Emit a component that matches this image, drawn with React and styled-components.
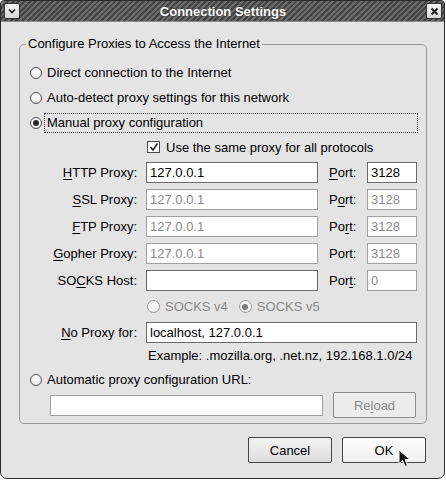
import React from 'react';
import styled, { createGlobalStyle } from 'styled-components';

const GlobalStyle = createGlobalStyle`
  html, body {
    margin: 0;
    padding: 0;
    background: #ffffff;
  }
  body {
    font-family: "Liberation Sans", Arial, sans-serif;
    font-size: 13px;
    color: #000;
  }
`;

const Window = styled.div`
  box-sizing: border-box;
  width: 445px;
  height: 479px;
  border: 1px solid #2b2b2b;
  border-radius: 4px 4px 7px 7px;
  background: #e4e4e4;
  overflow: hidden;
  display: flex;
  flex-direction: column;
`;

const TitleBar = styled.div`
  height: 20px;
  display: flex;
  align-items: center;
  justify-content: space-between;
  padding: 0 2px 0 3px;
  background: repeating-linear-gradient(135deg, #444 0px, #444 2px, #6c6c6c 2px, #6c6c6c 4px);
  border-bottom: 1px solid #8a8a8a;
`;

const Title = styled.div`
  flex: 1;
  text-align: center;
  color: #fff;
  font-weight: bold;
  font-size: 13px;
  text-shadow: 0 0 2px #333;
`;

const TitleButton = styled.div`
  box-sizing: border-box;
  width: 16px;
  height: 16px;
  border: 1px solid #333;
  border-radius: 2px;
  background: linear-gradient(#f4f4f4, #d8d8d8);
  display: flex;
  align-items: center;
  justify-content: center;
`;

const Body = styled.div`
  flex: 1;
  display: flex;
  flex-direction: column;
  padding: 15px 17px 0 18px;
`;

const Group = styled.fieldset`
  margin: 0;
  padding: 9px 8px 5px 10px;
  border: 1px solid #9a9a9a;
  border-radius: 5px;
  min-width: 0;
  display: flex;
  flex-direction: column;
`;

const Legend = styled.legend`
  padding: 0 2px;
  margin-left: -4px;
  line-height: 14px;
`;

const RadioRow = styled.div`
  display: flex;
  align-items: center;
  height: ${p => p.h || 25}px;
  margin-left: ${p => p.indent || 0}px;
`;

const RadioDot = styled.span`
  box-sizing: border-box;
  flex: none;
  width: ${p => p.size || 12}px;
  height: ${p => p.size || 12}px;
  border-radius: 50%;
  border: 1px solid ${p => (p.disabled ? '#9a9a9a' : '#4a4a4a')};
  background: linear-gradient(#ffffff, #ececec);
  display: flex;
  align-items: center;
  justify-content: center;
  margin-right: 3px;

  &::after {
    content: '';
    display: ${p => (p.checked ? 'block' : 'none')};
    width: 6px;
    height: 6px;
    border-radius: 50%;
    background: ${p => (p.disabled ? '#7a7a7a' : '#2a2a2a')};
  }
`;

const RadioLabel = styled.span`
  box-sizing: border-box;
  height: 20px;
  line-height: 18px;
  padding: 0 2px;
  color: ${p => (p.disabled ? '#8a8a8a' : '#000')};
  border: 1px ${p => (p.focused ? 'dotted #4a4a4a' : 'solid transparent')};
  margin-left: -1px;
  flex: ${p => (p.focused ? 1 : 'none')};
  margin-right: ${p => p.gap || 0}px;
`;

const CheckRow = styled.div`
  display: flex;
  align-items: center;
  height: 24px;
  margin-left: 117px;
  gap: 6px;
`;

const CheckBox = styled.span`
  box-sizing: border-box;
  width: 13px;
  height: 12px;
  border: 1px solid #4a4a4a;
  background: #fff;
  display: flex;
  align-items: center;
  justify-content: center;
`;

const ProxyGrid = styled.div`
  display: grid;
  grid-template-columns: 116px 172px 49px 50px;
  grid-auto-rows: 21px;
  row-gap: 6px;
  margin-top: ${p => p.top || 0}px;
`;

const FieldLabel = styled.label`
  display: flex;
  align-items: center;
  justify-content: flex-end;
  padding-right: 9px;
  white-space: nowrap;
`;

const PortLabel = styled.label`
  display: flex;
  align-items: center;
  padding-left: 11px;
`;

const TextField = styled.input`
  box-sizing: border-box;
  width: 100%;
  height: ${p => p.h || 21}px;
  margin: 0;
  padding: 0 3px;
  font: inherit;
  font-size: 13px;
  background: #fff;
  color: ${p => (p.disabled ? '#8a8a8a' : '#000')};
  border: 1px solid ${p => (p.disabled ? '#a0a0a0' : '#6a6a6a')};
  border-radius: 0;
  outline: none;
  grid-column: ${p => p.span || 'auto'};

  &:disabled {
    -webkit-text-fill-color: #8a8a8a;
    opacity: 1;
  }
`;

const Hint = styled.div`
  height: 26px;
  line-height: 26px;
  margin-left: 118px;
  white-space: nowrap;
`;

const UrlRow = styled.div`
  display: flex;
  align-items: center;
  height: 26px;
  margin-top: 1px;
  padding-left: 20px;
  gap: 10px;
`;

const Button = styled.button`
  position: relative;
  box-sizing: border-box;
  width: ${p => p.w || 84}px;
  height: 26px;
  margin: 0;
  padding: 0;
  font: inherit;
  font-size: 13px;
  color: ${p => (p.disabled ? '#8a8a8a' : '#000')};
  border: 1px solid ${p => (p.disabled ? '#8c8c8c' : '#444')};
  border-radius: 2px;
  background: ${p =>
    p.hot
      ? 'linear-gradient(#fcfcfc, #f0f0f0)'
      : p.disabled
      ? '#ececec'
      : 'linear-gradient(#f2f2f2, #dedede)'};
`;

const ButtonRow = styled.div`
  display: flex;
  justify-content: flex-end;
  gap: 10px;
  margin-top: 13px;
  padding-right: 1px;
`;

const U = styled.span`
  text-decoration: underline;
  text-underline-offset: 2px;
`;

const Pointer = styled.svg`
  position: absolute;
  left: 55px;
  top: 11px;
`;

const proxies = [
  { label: <><U>H</U>TTP Proxy:</>, port: <><U>P</U>ort:</>, host: '127.0.0.1', num: '3128', on: true },
  { label: <><U>S</U>SL Proxy:</>, port: <>P<U>o</U>rt:</>, host: '127.0.0.1', num: '3128' },
  { label: <><U>F</U>TP Proxy:</>, port: <>Po<U>r</U>t:</>, host: '127.0.0.1', num: '3128' },
  { label: <><U>G</U>opher Proxy:</>, port: <>Port:</>, host: '127.0.0.1', num: '3128' },
  { label: <>SO<U>C</U>KS Host:</>, port: <>Por<U>t</U>:</>, host: '', num: '0', on: true },
];

function Radio({ checked, disabled, size, children, focused, gap }) {
  return (
    <>
      <RadioDot checked={checked} disabled={disabled} size={size} />
      <RadioLabel focused={focused} disabled={disabled} gap={gap}>{children}</RadioLabel>
    </>
  );
}

export default function App() {
  return (
    <>
      <GlobalStyle />
      <Window>
        <TitleBar>
          <TitleButton>
            <svg width="10" height="8" viewBox="0 0 10 8">
              <path d="M2 2.5 L5 5.5 L8 2.5" fill="none" stroke="#222" strokeWidth="1.6" />
            </svg>
          </TitleButton>
          <Title>Connection Settings</Title>
          <TitleButton>
            <svg width="9" height="9" viewBox="0 0 9 9">
              <path d="M1.5 1.5 L7.5 7.5 M7.5 1.5 L1.5 7.5" fill="none" stroke="#222" strokeWidth="2" />
            </svg>
          </TitleButton>
        </TitleBar>

        <Body>
          <Group>
            <Legend>Configure Proxies to Access the Internet</Legend>
            <RadioRow>
              <Radio>Direct connection to the Internet</Radio>
            </RadioRow>
            <RadioRow>
              <Radio>Auto-detect proxy settings for this network</Radio>
            </RadioRow>
            <RadioRow>
              <Radio checked focused>Manual proxy configuration</Radio>
            </RadioRow>
            <CheckRow>
              <CheckBox>
                <svg width="10" height="10" viewBox="0 0 10 10">
                  <path d="M1.5 5 L4 8 L8.5 1.5" fill="none" stroke="#222" strokeWidth="1.6" />
                </svg>
              </CheckBox>
              <span>Use the same proxy for all protocols</span>
            </CheckRow>

            <ProxyGrid top={3}>
              {proxies.map((p, i) => (
                <React.Fragment key={i}>
                  <FieldLabel>{p.label}</FieldLabel>
                  <TextField defaultValue={p.host} disabled={!p.on} readOnly />
                  <PortLabel>{p.port}</PortLabel>
                  <TextField defaultValue={p.num} disabled={!p.on || p.num === '0'} readOnly />
                </React.Fragment>
              ))}
            </ProxyGrid>

            <RadioRow h={31} indent={117}>
              <Radio disabled size={13} gap={8}>SOCKS v4</Radio>
              <Radio disabled checked size={13}>SOCKS v5</Radio>
            </RadioRow>

            <ProxyGrid>
              <FieldLabel><U>N</U>o Proxy for:</FieldLabel>
              <TextField span="2 / 5" defaultValue="localhost, 127.0.0.1" readOnly />
            </ProxyGrid>
            <Hint>Example: .mozilla.org, .net.nz, 192.168.1.0/24</Hint>

            <RadioRow h={22}>
              <Radio>Automatic proxy configuration URL:</Radio>
            </RadioRow>
            <UrlRow>
              <TextField style={{ width: 273 }} defaultValue="" disabled readOnly />
              <Button w={83} disabled>Re<U>l</U>oad</Button>
            </UrlRow>
          </Group>

          <ButtonRow>
            <Button>Cancel</Button>
            <Button hot>
              OK
              <Pointer width="13" height="19" viewBox="0 0 13 19">
                <path d="M1 1 L1 15 L4.5 11.5 L7 17.5 L9.5 16.5 L7 10.5 L12 10.5 Z" fill="#111" stroke="#fff" strokeWidth="1" />
              </Pointer>
            </Button>
          </ButtonRow>
        </Body>
      </Window>
    </>
  );
}
